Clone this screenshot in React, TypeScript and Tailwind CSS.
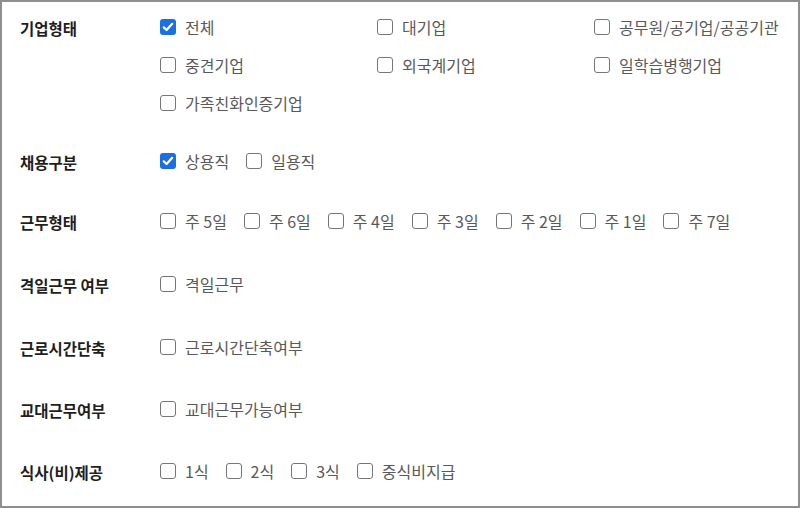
import React from 'react';

interface Option {
  label: string;
  checked?: boolean;
}

interface Section {
  title: string;
  options: Option[];
  grid?: boolean;
  space: string;
}

const sections: Section[] = [
  {
    title: '기업형태',
    grid: true,
    space: 'mt-[13px]',
    options: [
      { label: '전체', checked: true },
      { label: '대기업' },
      { label: '공무원/공기업/공공기관' },
      { label: '중견기업' },
      { label: '외국계기업' },
      { label: '일학습병행기업' },
      { label: '가족친화인증기업' },
    ],
  },
  {
    title: '채용구분',
    space: 'mt-[34px]',
    options: [{ label: '상용직', checked: true }, { label: '일용직' }],
  },
  {
    title: '근무형태',
    space: 'mt-[36px]',
    options: ['주 5일', '주 6일', '주 4일', '주 3일', '주 2일', '주 1일', '주 7일'].map((label) => ({ label })),
  },
  {
    title: '격일근무 여부',
    space: 'mt-[39px]',
    options: [{ label: '격일근무' }],
  },
  {
    title: '근로시간단축',
    space: 'mt-[39px]',
    options: [{ label: '근로시간단축여부' }],
  },
  {
    title: '교대근무여부',
    space: 'mt-[38px]',
    options: [{ label: '교대근무가능여부' }],
  },
  {
    title: '식사(비)제공',
    space: 'mt-[38px]',
    options: [{ label: '1식' }, { label: '2식' }, { label: '3식' }, { label: '중식비지급' }],
  },
];

const Checkbox: React.FC<{ checked?: boolean }> = ({ checked }) =>
  checked ? (
    <span className="w-4 h-4 rounded-[3px] bg-[#1a6fe3] flex items-center justify-center shrink-0">
      <svg viewBox="0 0 16 16" className="w-[14px] h-[14px]">
        <path d="M3.2 8.4 L6.4 11.4 L12.8 4.4" fill="none" stroke="#fff" strokeWidth="2.6" strokeLinecap="round" strokeLinejoin="round" />
      </svg>
    </span>
  ) : (
    <span className="w-4 h-4 rounded-[3px] border border-[#767676] bg-white shrink-0" />
  );

const Item: React.FC<{ option: Option }> = ({ option }) => (
  <label className="flex items-center h-6 gap-[9px] text-[16px] text-[#595959] whitespace-nowrap">
    <Checkbox checked={option.checked} />
    <span>{option.label}</span>
  </label>
);

export default function App() {
  return (
    <div
      className="w-[800px] h-[508px] bg-white border-2 border-[#8f8f8f] overflow-hidden"
      style={{ fontFamily: '"Noto Sans CJK KR", "Noto Sans", sans-serif' }}
    >
      <div className="flex flex-col">
        {sections.map((s) => (
          <div key={s.title} className={`flex items-start ${s.space}`}>
            <div className="w-[158px] pl-[18px] pt-[3px] h-6 flex items-center text-[15.5px] font-semibold text-[#1e1e1e] whitespace-nowrap shrink-0">
              {s.title}
            </div>
            {s.grid ? (
              <div className="grid grid-cols-[217px_217px_1fr] gap-y-[14px]">
                {s.options.map((o) => (
                  <Item key={o.label} option={o} />
                ))}
              </div>
            ) : (
              <div className="flex gap-x-[17px]">
                {s.options.map((o) => (
                  <Item key={o.label} option={o} />
                ))}
              </div>
            )}
          </div>
        ))}
      </div>
    </div>
  );
}
